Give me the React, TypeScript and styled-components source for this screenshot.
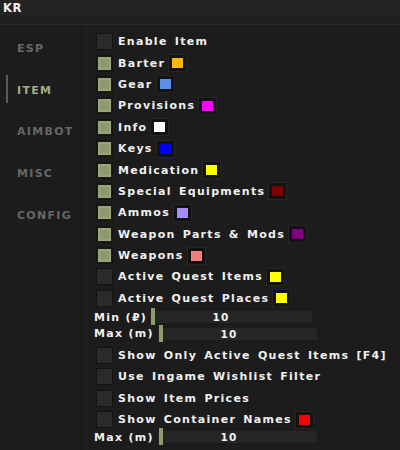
import React from "react";
import styled, { createGlobalStyle } from "styled-components";

const Global = createGlobalStyle`
  html, body { margin: 0; padding: 0; background: #1c1c1c; }
  * { box-sizing: border-box; }
`;

const Window = styled.div`
  width: 400px;
  height: 450px;
  background: #1c1c1c;
  display: flex;
  flex-direction: column;
  overflow: hidden;
  font-family: "DejaVu Sans", Verdana, sans-serif;
  font-weight: bold;
  font-size: 11px;
  letter-spacing: 1.3px;
  word-spacing: 2px;
`;

const TitleBar = styled.div`
  height: 15px;
  background: #242424;
  color: #f2f2f2;
  padding-left: 3px;
  display: flex;
  align-items: center;
  font-size: 11.5px;
  letter-spacing: 0.5px;
`;

const SubBar = styled.div`
  height: 10px;
  background: #1f1f1f;
  border-bottom: 1px solid #2a2a2a;
`;

const Body = styled.div`
  flex: 1;
  display: flex;
`;

const Sidebar = styled.div`
  width: 86px;
  padding-top: 2.5px;
  display: flex;
  flex-direction: column;
`;

const NavItem = styled.div<{ $active?: boolean }>`
  position: relative;
  height: 41.75px;
  display: flex;
  align-items: center;
  padding-left: 17px;
  color: ${(p) => (p.$active ? "#a3ad86" : "#676767")};
  &::before {
    content: "";
    display: ${(p) => (p.$active ? "block" : "none")};
    position: absolute;
    left: 6px;
    top: 6px;
    bottom: 8px;
    width: 2px;
    background: #5a5a5a;
  }
`;

const Panel = styled.div`
  flex: 1;
  border-left: 1px solid #242424;
  padding: 6px 0 0 7px;
  display: flex;
  flex-direction: column;
`;

const Row = styled.div<{ $h?: number }>`
  height: ${(p) => p.$h ?? 21.4}px;
  flex-shrink: 0;
  display: flex;
  align-items: center;
  color: #f0f0f0;
`;

const Box = styled.div<{ $on?: boolean }>`
  width: 17px;
  height: 17px;
  margin-left: 2px;
  margin-right: 5px;
  border: 1px solid #131313;
  background: ${(p) => (p.$on ? "#8e9a6c" : "#2a2a2a")};
  box-shadow: ${(p) =>
    p.$on ? "inset 0 0 0 1px #1a1a1a, inset 0 0 0 3px #99a578" : "none"};
  flex-shrink: 0;
`;

const Swatch = styled.div<{ $c: string }>`
  width: 17px;
  height: 16px;
  margin-left: 4px;
  background: ${(p) => p.$c};
  border: 3px solid #121212;
  outline: 1px solid #262626;
  flex-shrink: 0;
`;

const SliderRow = styled.div<{ $h: number }>`
  height: ${(p) => p.$h}px;
  flex-shrink: 0;
  display: flex;
  align-items: center;
  color: #f0f0f0;
`;

const SliderLabel = styled.span<{ $w: number }>`
  width: ${(p) => p.$w}px;
  word-spacing: 0;
`;

const Track = styled.div<{ $w: number }>`
  position: relative;
  width: ${(p) => p.$w}px;
  height: 12px;
  background: #262626;
  display: flex;
  align-items: center;
  font-size: 10.5px;
`;

const Thumb = styled.div`
  position: absolute;
  left: 1px;
  top: -3px;
  width: 4px;
  height: 17px;
  background: #8f9b6c;
`;

const Value = styled.span`
  width: 142px;
  text-align: center;
`;

type Item = { label: string; on?: boolean; color?: string };

const top: Item[] = [
  { label: "Enable Item" },
  { label: "Barter", on: true, color: "#f7b900" },
  { label: "Gear", on: true, color: "#5b8fe6" },
  { label: "Provisions", on: true, color: "#ff00ff" },
  { label: "Info", on: true, color: "#ffffff" },
  { label: "Keys", on: true, color: "#0000f0" },
  { label: "Medication", on: true, color: "#ffff00" },
  { label: "Special Equipments", on: true, color: "#7e0000" },
  { label: "Ammos", on: true, color: "#a88cff" },
  { label: "Weapon Parts & Mods", on: true, color: "#800080" },
  { label: "Weapons", on: true, color: "#f08080" },
  { label: "Active Quest Items", color: "#ffff00" },
  { label: "Active Quest Places", color: "#ffff00" },
];

const bottom: Item[] = [
  { label: "Show Only Active Quest Items [F4]" },
  { label: "Use Ingame Wishlist Filter" },
  { label: "Show Item Prices" },
  { label: "Show Container Names", color: "#ff0000" },
];

const CheckRow = ({ item }: { item: Item }) => (
  <Row>
    <Box $on={item.on} />
    <span>{item.label}</span>
    {item.color && <Swatch $c={item.color} />}
  </Row>
);

const Slider = ({ label, lw, w, h }: { label: string; lw: number; w: number; h: number }) => (
  <SliderRow $h={h}>
    <SliderLabel $w={lw}>{label}</SliderLabel>
    <Track $w={w}>
      <Thumb />
      <Value>10</Value>
    </Track>
  </SliderRow>
);

export default function App() {
  return (
    <Window>
      <Global />
      <TitleBar>KR</TitleBar>
      <SubBar />
      <Body>
        <Sidebar>
          <NavItem>ESP</NavItem>
          <NavItem $active>ITEM</NavItem>
          <NavItem>AIMBOT</NavItem>
          <NavItem>MISC</NavItem>
          <NavItem>CONFIG</NavItem>
        </Sidebar>
        <Panel>
          {top.map((it) => (
            <CheckRow key={it.label} item={it} />
          ))}
          <Slider label="Min (₽)" lw={56} w={162} h={16} />
          <Slider label="Max (m)" lw={64} w={159} h={17.6} />
          <Row $h={2} />
          {bottom.map((it) => (
            <CheckRow key={it.label} item={it} />
          ))}
          <Slider label="Max (m)" lw={64} w={159} h={14} />
        </Panel>
      </Body>
    </Window>
  );
}
